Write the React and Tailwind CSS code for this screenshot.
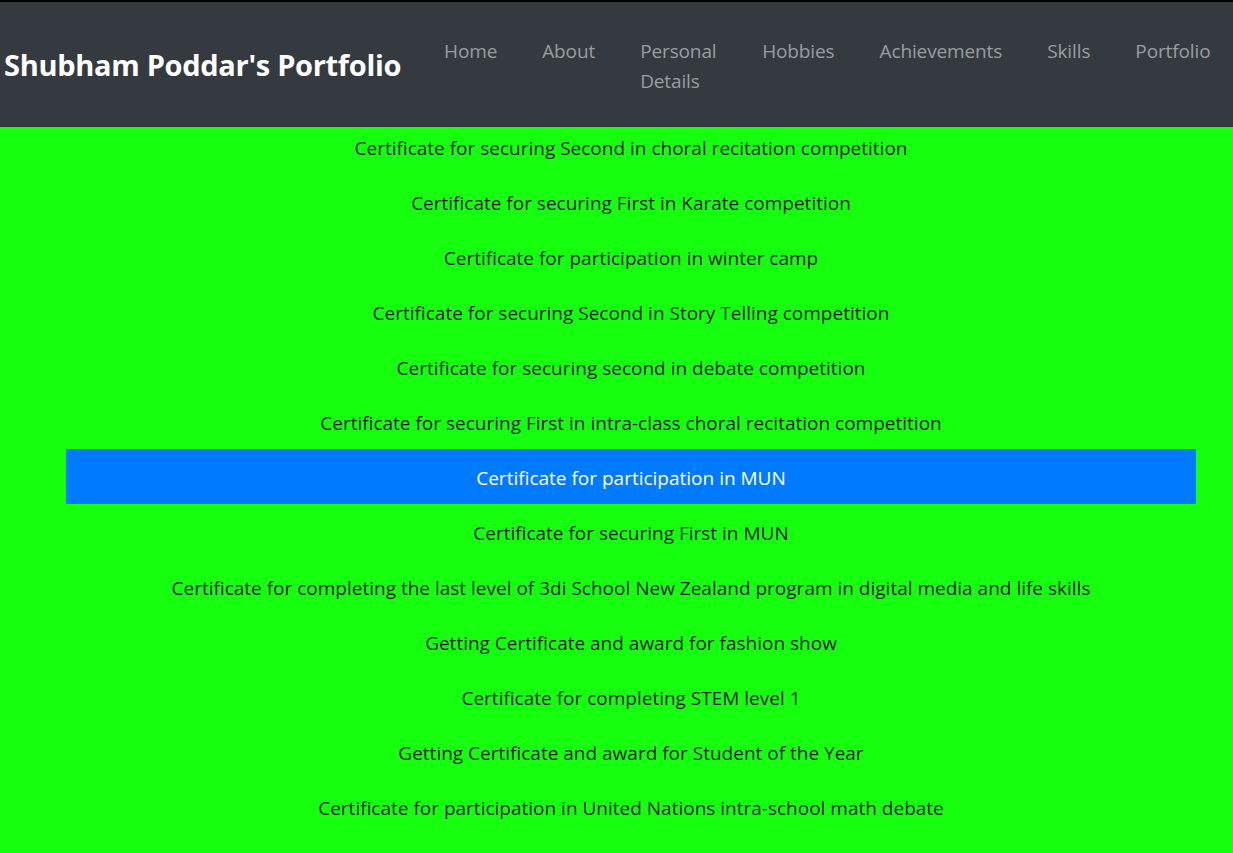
import React from "react";

const items = [
  "Certificate for securing Second in choral recitation competition",
  "Certificate for securing First in Karate competition",
  "Certificate for participation in winter camp",
  "Certificate for securing Second in Story Telling competition",
  "Certificate for securing second in debate competition",
  "Certificate for securing First in intra-class choral recitation competition",
  "Certificate for participation in MUN",
  "Certificate for securing First in MUN",
  "Certificate for completing the last level of 3di School New Zealand program in digital media and life skills",
  "Getting Certificate and award for fashion show",
  "Certificate for completing STEM level 1",
  "Getting Certificate and award for Student of the Year",
  "Certificate for participation in United Nations intra-school math debate",
];

const nav = ["Home", "About", "Personal Details", "Hobbies", "Achievements", "Skills", "Portfolio"];

export default function App() {
  return (
    <div
      className="relative h-[853px] overflow-hidden bg-[#16ff0f]"
      style={{ fontFamily: '"Open Sans", "Noto Sans", sans-serif' }}
    >
      <nav className="fixed top-0 left-0 right-0 z-10 h-[127px] bg-[#343a40] border-t-2 border-black flex items-center justify-between">
        <a className="pl-[4px] text-[29px] font-bold text-white tracking-[-0.3px]">Shubham Poddar's Portfolio</a>
        <ul className="flex items-start pt-[2px]">
          {nav.map((n) => (
            <li key={n} className="px-[22.5px] py-2">
              <span
                className={
                  "block text-[19px] leading-[30px] text-[#9a9da0] tracking-[-0.12px] " +
                  (n === "Personal Details" ? "w-[77px]" : "")
                }
              >
                {n}
              </span>
            </li>
          ))}
        </ul>
      </nav>
      <ul className="pt-[119px] ml-[66px] w-[1130px]">
        {items.map((t, i) => (
          <li
            key={i}
            className={
              "h-[55px] pt-[4px] flex items-center justify-center text-[19px] " +
              (i === 6 ? "bg-[#007bff] text-white" : "text-[#212529]")
            }
          >
            {t}
          </li>
        ))}
      </ul>
    </div>
  );
}
